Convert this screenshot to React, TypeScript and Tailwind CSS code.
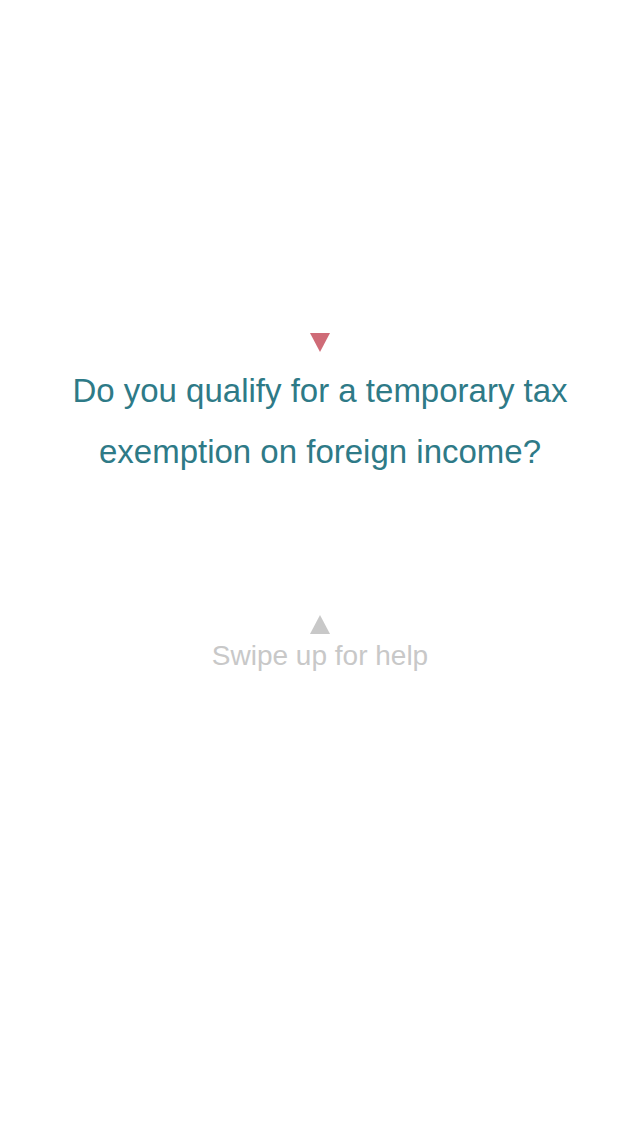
import React from "react";

export default function App() {
  return (
    <div className="w-[640px] h-[1136px] bg-white flex flex-col items-center" style={{ fontFamily: '"Liberation Sans", Arial, sans-serif' }}>
      <div className="h-[333px] shrink-0" />
      <svg width="20" height="19" viewBox="0 0 20 19" className="shrink-0">
        <polygon points="0,0 20,0 10,19" fill="#cf6b77" />
      </svg>
      <p className="mt-[8px] text-center text-[33px] leading-[61px] text-[#2e7a87] whitespace-nowrap">
        Do you qualify for a temporary tax<br />exemption on foreign income?
      </p>
      <svg width="20" height="19" viewBox="0 0 20 19" className="mt-[133px] shrink-0">
        <polygon points="10,0 20,19 0,19" fill="#c8c8c8" />
      </svg>
      <p className="text-center text-[28px] leading-[44px] text-[#c8c8c8]">Swipe up for help</p>
    </div>
  );
}
